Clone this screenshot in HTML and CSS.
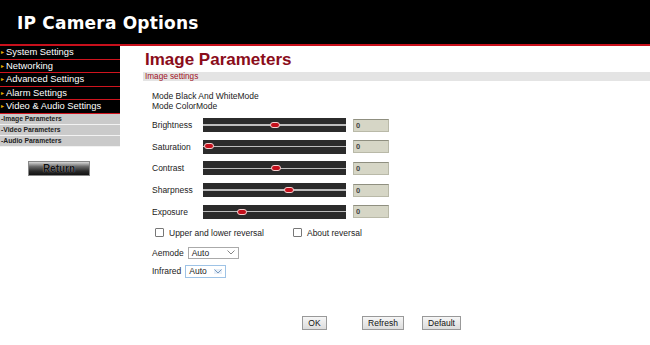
FILE: index.html
```html
<!DOCTYPE html>
<html>
<head>
<meta charset="utf-8">
<link rel="stylesheet" href="styles.css">
</head>
<body>
<div class="page">
  <header class="header"><h1 class="title">IP Camera Options</h1></header>
  <div class="main">
    <nav class="sidebar">
      <ul class="menu">
        <li class="menu-item"><span class="bullet">▸</span>System Settings</li>
        <li class="menu-item"><span class="bullet">▸</span>Networking</li>
        <li class="menu-item"><span class="bullet">▸</span>Advanced Settings</li>
        <li class="menu-item"><span class="bullet">▸</span>Alarm Settings</li>
        <li class="menu-item"><span class="bullet">▸</span>Video &amp; Audio Settings</li>
      </ul>
      <ul class="submenu">
        <li class="sub-item">-Image Parameters</li>
        <li class="sub-item">-Video Parameters</li>
        <li class="sub-item">-Audio Parameters</li>
      </ul>
      <div class="return-wrap"><button class="return-btn">Return</button></div>
    </nav>
    <section class="content">
      <h2 class="page-title">Image Parameters</h2>
      <div class="section-bar">Image settings</div>
      <div class="body">
        <div class="modes">
          <div>Mode Black And WhiteMode</div>
          <div>Mode ColorMode</div>
        </div>
        <div class="sliders">
          <div class="row"><span class="label">Brightness</span><div class="track"><span class="thumb" style="left:47%"></span></div><input class="val" value="0"></div>
          <div class="row"><span class="label">Saturation</span><div class="track"><span class="thumb" style="left:1%"></span></div><input class="val" value="0"></div>
          <div class="row"><span class="label">Contrast</span><div class="track"><span class="thumb" style="left:47.5%"></span></div><input class="val" value="0"></div>
          <div class="row"><span class="label">Sharpness</span><div class="track"><span class="thumb" style="left:56.5%"></span></div><input class="val" value="0"></div>
          <div class="row"><span class="label">Exposure</span><div class="track"><span class="thumb" style="left:23.5%"></span></div><input class="val" value="0"></div>
        </div>
        <div class="checks">
          <label class="check"><span class="box"></span>Upper and lower reversal</label>
          <label class="check"><span class="box"></span>About reversal</label>
        </div>
        <div class="field"><span class="flabel">Aemode</span><span class="select sel-ae">Auto<svg class="chev" viewBox="0 0 8 5" width="8" height="5"><path d="M0.5 0.5 L4 4 L7.5 0.5" fill="none" stroke="#777" stroke-width="0.9"/></svg></span></div>
        <div class="field"><span class="flabel">Infrared</span><span class="select sel-ir">Auto<svg class="chev" viewBox="0 0 8 5" width="8" height="5"><path d="M0.5 0.5 L4 4 L7.5 0.5" fill="none" stroke="#6a8fb5" stroke-width="0.9"/></svg></span></div>
      </div>
      <div class="actions">
        <button class="btn btn-ok">OK</button>
        <button class="btn btn-refresh">Refresh</button>
        <button class="btn btn-default">Default</button>
      </div>
    </section>
  </div>
</div>
</body>
</html>
```
FILE: styles.css
```css
* { box-sizing: border-box; }
html, body { margin: 0; padding: 0; background: #fff; }
body { font-family: "Liberation Sans", Arial, sans-serif; color: #222; }
.page { width: 650px; height: 345px; overflow: hidden; }

.header {
  height: 46px;
  background: #000;
  border-bottom: 2px solid #c8101c;
  padding-left: 17px;
  display: flex;
  align-items: center;
}
.title {
  margin: 0;
  font-family: "DejaVu Sans", Verdana, sans-serif;
  font-weight: bold;
  font-size: 17px;
  color: #fff;
  letter-spacing: 0.2px;
  padding-top: 2px;
}

.main { display: flex; }

.sidebar { width: 120px; flex: none; }
.menu, .submenu { list-style: none; margin: 0; padding: 0; }
.menu-item {
  height: 13.6px;
  line-height: 12px;
  background: #000;
  border-bottom: 1.6px solid #d0141e;
  color: #fff;
  font-size: 9.4px;
  padding-left: 1px;
  white-space: nowrap;
}
.bullet { color: #e8b000; font-size: 6px; margin-right: 2px; position: relative; top: -1px; }
.sub-item {
  height: 11px;
  line-height: 9.5px;
  background: #cacaca;
  border-bottom: 1.2px solid #f2f2f2;
  color: #222;
  font-size: 6.8px;
  font-weight: bold;
  padding-left: 1px;
  white-space: nowrap;
}
.return-wrap { padding: 11px 0 0 28px; }
.return-btn {
  width: 62px;
  height: 15px;
  padding: 0;
  border: 1px solid #888;
  background: linear-gradient(#d8d8d8 0%, #6a6a6a 35%, #2a2a2a 70%, #111 100%);
  color: #111;
  font-family: "Liberation Sans", Arial, sans-serif;
  font-weight: bold;
  font-size: 10px;
  line-height: 13px;
  text-shadow: 0 0 1px #ccc;
}

.content { flex: 1; padding-left: 23px; position: relative; }
.page-title {
  margin: 4px 0 0 2px;
  font-size: 17px;
  font-weight: bold;
  color: #8a0c1a;
  line-height: 19px;
}
.section-bar {
  margin-top: 3px;
  height: 9px;
  line-height: 9px;
  background: #e4e4e4;
  color: #a0101e;
  font-size: 8.2px;
  padding-left: 2px;
}
.body { padding-left: 9px; font-size: 8.5px; color: #222; }
.modes { margin-top: 11px; line-height: 9.5px; }
.sliders { margin-top: 7px; display: flex; flex-direction: column; gap: 7.7px; }
.row { display: flex; align-items: center; height: 14px; }
.label { width: 51px; }
.track {
  position: relative;
  width: 143px;
  height: 14px;
  background: #2b2b2b;
}
.track::before {
  content: "";
  position: absolute;
  left: 0; right: 0; top: 6.3px;
  height: 1.3px;
  background: #bdbdbd;
}
.thumb {
  position: absolute;
  top: 3.8px;
  width: 10px;
  height: 6px;
  background: #c5101c;
  border: 1.5px solid #f4d0d0;
  border-radius: 3px;
}
.val {
  margin-left: 7px;
  width: 36px;
  height: 13px;
  border: 1px solid #b9b9a8;
  border-top-color: #8f8f80;
  background: #d6d6c6;
  font-family: "Liberation Sans", Arial, sans-serif;
  font-size: 7.5px;
  font-weight: bold;
  color: #444;
  padding: 0 0 0 2px;
}

.checks { margin-top: 9px; margin-left: 3px; display: flex; }
.check { display: flex; align-items: center; }
.check + .check { margin-left: 29px; }
.box { width: 9px; height: 9px; border: 1px solid #777; border-radius: 1px; background: #fff; margin-right: 5px; }
.field { display: flex; align-items: center; margin-top: 9px; }
.field + .field { margin-top: 6px; }
.flabel { margin-right: 4px; }
.select {
  display: inline-flex;
  align-items: center;
  justify-content: space-between;
  height: 12px;
  border: 1px solid #aaa;
  background: #fff;
  font-size: 8.5px;
  padding: 0 3px;
}
.sel-ae { width: 51px; }
.sel-ir { width: 41px; height: 13px; border-color: #9ec3e6; }
.sel-ir .chev { background: #e6eef8; }

.actions { position: absolute; top: 270px; left: 0; width: 100%; display: flex; padding-left: 182px; }
.btn {
  height: 14px;
  padding: 0 4px;
  border: 1px solid #999;
  background: linear-gradient(#f6f6f6, #dcdcdc);
  font-family: "Liberation Sans", Arial, sans-serif;
  font-size: 8.5px;
  color: #111;
  line-height: 12px;
}
.btn-ok { width: 25px; }
.btn-refresh { margin-left: 35px; width: 42px; }
.btn-default { margin-left: 18px; width: 39px; }
```
